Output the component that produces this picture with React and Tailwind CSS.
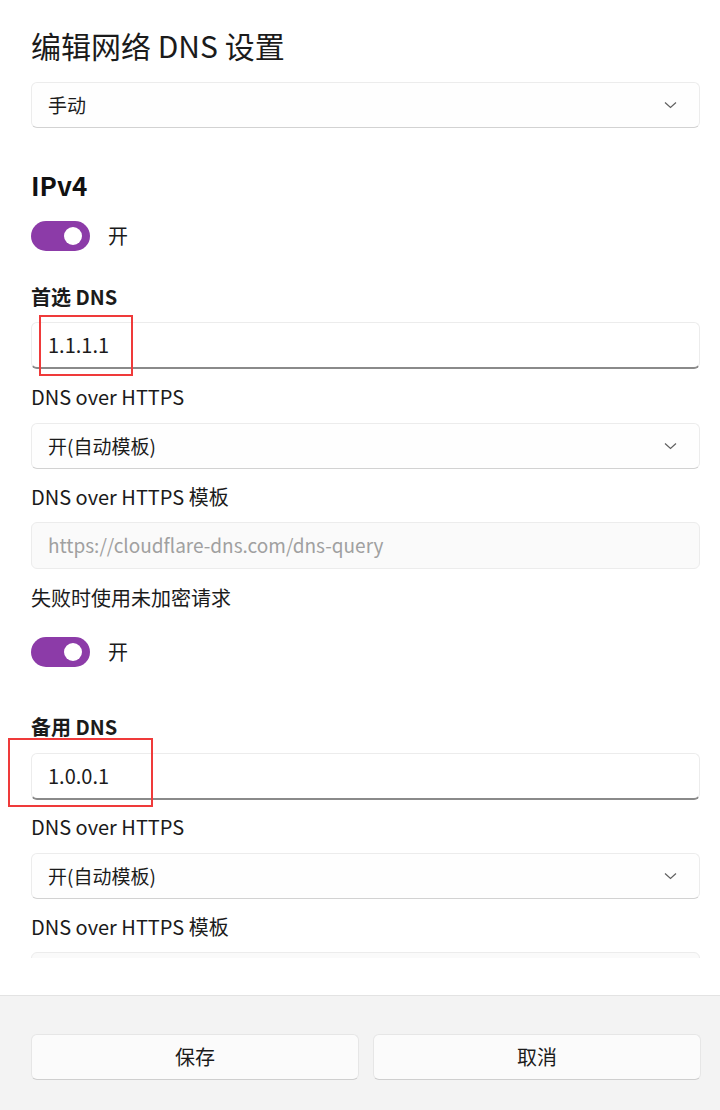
import React from "react";

const font = { fontFamily: '"Noto Sans CJK SC", "Noto Sans", sans-serif' };

/* CHEVRON */
const Chevron = () => (
  <svg width="13" height="8" viewBox="0 0 13 8" className="shrink-0">
    <path d="M1 1.5 L6.5 6.5 L12 1.5" fill="none" stroke="#606060" strokeWidth="1.2" />
  </svg>
);

const Select = ({ value, className = "" }) => (
  <div
    className={`h-[46px] rounded-[6px] border border-[#ececec] border-b-[#d2d2d2] bg-[#fefefe] flex items-center justify-between pl-[16px] pr-[22px] text-[19px] text-[#1b1b1b] ${className}`}
  >
    <span>{value}</span>
    <Chevron />
  </div>
);

const Input = ({ value, disabled, className = "", children }) => (
  <div
    className={`relative h-[47px] rounded-[6px] border border-[#ececec] flex items-center pl-[16px] ${
      disabled
        ? "bg-[#fafafa] text-[#a0a0a0] text-[19px]"
        : "bg-white text-[#1b1b1b] text-[20px] border-b-2 border-b-[#8a8a8a]"
    } ${className}`}
  >
    <span>{value}</span>
    {children}
  </div>
);

const Toggle = ({ className = "" }) => (
  <div className={`flex items-center gap-[18px] ${className}`}>
    <div className="w-[59px] h-[30px] rounded-full bg-[#8c3ba8] flex items-center justify-end pr-[8px]">
      <div className="w-[18px] h-[18px] rounded-full bg-white" />
    </div>
    <span className="text-[20px] text-[#1b1b1b]">开</span>
  </div>
);

const Label = ({ children, bold, className = "" }) => (
  <div className={`h-[28px] leading-[28px] text-[20px] text-[#1b1b1b] ${bold ? "font-semibold" : ""} ${className}`}>
    {children}
  </div>
);

export default function App() {
  return (
    <div style={font} className="w-[720px] h-[1110px] bg-white flex flex-col overflow-hidden">
      {/* CONTENT */}
      <div className="h-[958px] overflow-hidden pl-[31px] pr-[20px] pt-[26px] shrink-0">
        <h1 className="h-[38px] leading-[38px] text-[30px] text-[#1b1b1b]">编辑网络 DNS 设置</h1>
        <Select value="手动" className="mt-[18px]" />

        <h2 className="mt-[40px] h-[34px] leading-[34px] text-[26px] font-semibold text-[#111]">IPv4</h2>
        <Toggle className="mt-[19px]" />

        <Label bold className="mt-[32px]">首选 DNS</Label>
        <Input value="1.1.1.1" className="mt-[11px]">
          <div className="absolute left-[7px] top-[-8px] w-[94px] h-[61px] border-2 border-[#ef3a3a]" />
        </Input>

        <Label className="mt-[14px]">DNS over HTTPS</Label>
        <Select value="开(自动模板)" className="mt-[12px]" />

        <Label className="mt-[14px]">DNS over HTTPS 模板</Label>
        <Input value="https://cloudflare-dns.com/dns-query" disabled className="mt-[11px]" />

        <Label className="mt-[15px]">失败时使用未加密请求</Label>
        <Toggle className="mt-[25px]" />

        <Label bold className="mt-[46px]">备用 DNS</Label>
        <Input value="1.0.0.1" className="mt-[12px]">
          <div className="absolute left-[-24px] top-[-16px] w-[145px] h-[69px] border-2 border-[#ef3a3a]" />
        </Input>

        <Label className="mt-[13px]">DNS over HTTPS</Label>
        <Select value="开(自动模板)" className="mt-[12px]" />

        <Label className="mt-[14px]">DNS over HTTPS 模板</Label>
        <Input value="" disabled className="mt-[11px]" />
      </div>

      <div className="h-[37px] shrink-0" />

      {/* FOOTER */}
      <div className="flex-1 bg-[#f3f3f3] border-t border-[#e3e3e3] pl-[31px] pr-[19px] pt-[38px] flex gap-[14px]">
        <button className="flex-1 h-[46px] rounded-[6px] bg-[#fbfbfb] border border-[#e6e6e6] border-b-[#cfcfcf] text-[20px] text-[#1b1b1b]">
          保存
        </button>
        <button className="flex-1 h-[46px] rounded-[6px] bg-[#fbfbfb] border border-[#e6e6e6] border-b-[#cfcfcf] text-[20px] text-[#1b1b1b]">
          取消
        </button>
      </div>
    </div>
  );
}
